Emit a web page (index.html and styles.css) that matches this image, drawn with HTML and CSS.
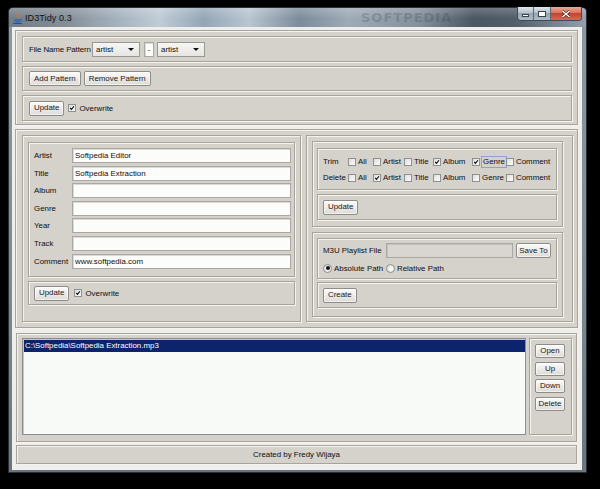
FILE: index.html
```html
<!DOCTYPE html>
<html>
<head>
<meta charset="utf-8">
<title>ID3Tidy 0.3</title>
<link rel="stylesheet" href="styles.css">
</head>
<body>
<div class="window">
  <div class="titlebar">
    <svg class="appicon" width="10" height="11" viewBox="0 0 10 11">
      <path d="M4 0.5 C2.5 2 5.5 3 4 5 M6 1.5 C5 3 7 3.5 5.8 5" stroke="#e0702a" stroke-width="1" fill="none"/>
      <path d="M1 6 H8 C8 9 6.5 10 4.5 10 C2.5 10 1 9 1 6 Z" fill="#3d6fb0"/>
      <path d="M8 6.5 C10 6.5 10 8.5 7.5 8.8" stroke="#3d6fb0" stroke-width="0.9" fill="none"/>
      <rect x="0" y="10" width="9" height="1" fill="#2c4f80"/>
    </svg>
    <span class="title">ID3Tidy 0.3</span>
    <span class="watermark">SOFTPEDIA</span>
    <div class="caption">
      <div class="cb min"><span class="g-min"></span></div>
      <div class="cb max"><span class="g-max"></span></div>
      <div class="cb close">
        <svg width="10" height="8" viewBox="0 0 10 8"><path d="M1.5 1 L8.5 7 M8.5 1 L1.5 7" stroke="#3a1a14" stroke-width="2.6"/><path d="M1.5 1 L8.5 7 M8.5 1 L1.5 7" stroke="#fff" stroke-width="1.5"/></svg>
      </div>
    </div>
  </div>

  <div class="client">
    <div class="panel top">
      <div class="sub row pattern">
        <span class="lbl">File Name Pattern</span>
        <div class="combo">artist<i class="arrow"></i></div>
        <div class="field dash">-</div>
        <div class="combo">artist<i class="arrow"></i></div>
      </div>
      <div class="sub row">
        <button class="btn">Add Pattern</button>
        <button class="btn">Remove Pattern</button>
      </div>
      <div class="sub row">
        <button class="btn">Update</button>
        <label class="chk"><i class="box on"><svg viewBox="0 0 8 8"><path d="M1.6 3.9 L3.3 5.8 L6.6 1.7" stroke="#000" stroke-width="1.4" fill="none"/></svg></i>Overwrite</label>
      </div>
    </div>

    <div class="panel middle">
      <div class="panel left">
        <div class="sub form">
          <span>Artist</span><div class="field">Softpedia Editor</div>
          <span>Title</span><div class="field">Softpedia Extraction</div>
          <span>Album</span><div class="field"></div>
          <span>Genre</span><div class="field"></div>
          <span>Year</span><div class="field"></div>
          <span>Track</span><div class="field"></div>
          <span>Comment</span><div class="field">www.softpedia.com</div>
        </div>
        <div class="sub row upd">
          <button class="btn">Update</button>
          <label class="chk"><i class="box on"><svg viewBox="0 0 8 8"><path d="M1.6 3.9 L3.3 5.8 L6.6 1.7" stroke="#000" stroke-width="1.4" fill="none"/></svg></i>Overwrite</label>
        </div>
      </div>

      <div class="panel right">
        <div class="panel group trimgroup">
          <div class="sub tgrid">
            <span>Trim</span>
            <label class="chk"><i class="box"></i>All</label>
            <label class="chk"><i class="box"></i>Artist</label>
            <label class="chk"><i class="box"></i>Title</label>
            <label class="chk"><i class="box on"><svg viewBox="0 0 8 8"><path d="M1.6 3.9 L3.3 5.8 L6.6 1.7" stroke="#000" stroke-width="1.4" fill="none"/></svg></i>Album</label>
            <label class="chk"><i class="box on"><svg viewBox="0 0 8 8"><path d="M1.6 3.9 L3.3 5.8 L6.6 1.7" stroke="#000" stroke-width="1.4" fill="none"/></svg></i><span class="focus">Genre</span></label>
            <label class="chk"><i class="box"></i>Comment</label>

            <span>Delete</span>
            <label class="chk"><i class="box"></i>All</label>
            <label class="chk"><i class="box on"><svg viewBox="0 0 8 8"><path d="M1.6 3.9 L3.3 5.8 L6.6 1.7" stroke="#000" stroke-width="1.4" fill="none"/></svg></i>Artist</label>
            <label class="chk"><i class="box"></i>Title</label>
            <label class="chk"><i class="box"></i>Album</label>
            <label class="chk"><i class="box"></i>Genre</label>
            <label class="chk"><i class="box"></i>Comment</label>
          </div>
          <div class="sub row">
            <button class="btn">Update</button>
          </div>
        </div>
        <div class="panel group m3ugroup">
          <div class="sub m3u">
            <span>M3U Playlist File</span>
            <div class="field disabled"></div>
            <button class="btn">Save To</button>
            <label class="radio"><i class="rd on"></i>Absolute Path</label>
            <label class="radio"><i class="rd"></i>Relative Path</label>
          </div>
          <div class="sub row">
            <button class="btn">Create</button>
          </div>
        </div>
      </div>
    </div>

    <div class="panel bottom">
      <div class="list">
        <div class="item sel">C:\Softpedia\Softpedia Extraction.mp3</div>
      </div>
      <div class="panel btns">
        <button class="btn">Open</button>
        <button class="btn">Up</button>
        <button class="btn">Down</button>
        <button class="btn">Delete</button>
      </div>
    </div>

    <div class="panel footer">Created by Fredy Wijaya</div>
  </div>
</div>
</body>
</html>
```

FILE: styles.css
```css
* { box-sizing: border-box; }

html, body {
  margin: 0;
  padding: 0;
}

body {
  width: 600px;
  height: 489px;
  overflow: hidden;
  background: #000;
  font-family: "Liberation Sans", Arial, sans-serif;
  font-size: 7.9px;
  color: #0e0e0e;
}

.window {
  margin: 7px 0 0 8px;
  width: 579px;
  height: 466px;
  border: 1px solid #2a3037;
  border-radius: 5px 5px 0 0;
  background: linear-gradient(180deg, #8d98a1 0%, #7e8993 60%, #6b757e 100%);
  padding: 0 4px 2px 3px;
  display: flex;
  flex-direction: column;
}

/* ---------- title bar ---------- */
.titlebar {
  height: 19px;
  margin: 0 -4px 0 -3px;
  padding: 0 4px 0 4px;
  display: flex;
  align-items: center;
  border-radius: 4px 4px 0 0;
  background:
    linear-gradient(180deg, rgba(255,255,255,0.2) 0%, rgba(255,255,255,0) 55%),
    linear-gradient(90deg, #737d86 0px, #868f98 60px, #a2b0bc 105px, #c0ccd6 150px, #94a6b6 195px,
      #b9c6d1 240px, #7c8c9a 290px, #9eabb7 340px, #83909c 410px, #4a5662 465px, #515d69 505px, #949fab 577px);
  position: relative;
}

.appicon { flex: none; margin-top: 1px; }

.title {
  margin-left: 2px;
  font-size: 9px;
  color: #111;
  letter-spacing: 0.1px;
}

.watermark {
  position: absolute;
  left: 352px;
  top: 2px;
  font-family: "DejaVu Sans", sans-serif;
  font-weight: bold;
  font-size: 13px;
  letter-spacing: 1px;
  color: rgba(40, 55, 70, 0.22);
}

.caption {
  margin-left: auto;
  align-self: flex-start;
  margin-top: -1px;
  display: flex;
  height: 14px;
  border: 1px solid #3f4953;
  border-top: none;
  border-radius: 0 0 4px 4px;
  overflow: hidden;
}

.cb {
  height: 100%;
  display: flex;
  align-items: center;
  justify-content: center;
}

.cb.min, .cb.max {
  width: 16px;
  background: linear-gradient(180deg, #dfe5eb 0%, #b4c0cb 45%, #96a5b3 50%, #aebbc7 100%);
  border-right: 1px solid #5c6772;
}
.cb.max { width: 17px; }

.cb.close {
  width: 30px;
  background: linear-gradient(180deg, #eaa997 0%, #d8735e 45%, #c3442e 50%, #d66a52 100%);
}

.g-min {
  width: 7px;
  height: 3px;
  margin-top: 3px;
  background: #fff;
  border: 1px solid #38424c;
}
.g-max {
  width: 8px;
  height: 6px;
  border: 1px solid #38424c;
  box-shadow: inset 0 0 0 1px #fff, inset 0 2px 0 1px #fff;
}

/* ---------- client area ---------- */
.client {
  height: 443px;
  background: #efeeea;
  padding: 3px 4px 0 3px;
  display: flex;
  flex-direction: column;
}

.panel, .sub {
  background: #d5d1cb;
  border: 1px solid #a7a39d;
  box-shadow: inset 1px 1px 0 #f4f3f0, 1px 1px 0 #f4f3f0;
}

/* top */
.top {
  height: 95px;
  padding: 5px 5px 3px 6px;
  display: flex;
  flex-direction: column;
  gap: 4px;
}
.top .sub { height: 26px; }
.top .sub:nth-child(2) { height: 25px; }

.row {
  display: flex;
  align-items: center;
  padding-left: 6px;
  gap: 3px;
}

.pattern { gap: 0; }
.pattern .lbl { width: 63px; white-space: nowrap; letter-spacing: -0.1px; }
.pattern .dash { margin: 0 3px 0 4px; }

.combo {
  position: relative;
  width: 48px;
  height: 15px;
  line-height: 13px;
  padding-left: 3px;
  border: 1px solid #9b9893;
  background: linear-gradient(180deg, #f6f6f5, #e6e5e2);
}
.arrow {
  position: absolute;
  right: 5px;
  top: 5px;
  width: 0;
  height: 0;
  border-left: 3px solid transparent;
  border-right: 3px solid transparent;
  border-top: 3px solid #111;
}

.field {
  height: 15px;
  line-height: 13px;
  padding-left: 2px;
  background: #fcfcfb;
  border: 1px solid #aaa8a4;
  box-shadow: inset 1px 1px 0 #dcdad6;
  white-space: nowrap;
  overflow: hidden;
}
.field.dash {
  width: 10px;
  padding: 0;
  text-align: center;
}
.field.disabled {
  background: #d9d6d1;
  box-shadow: inset 1px 1px 0 #c4c1bc;
}

.btn {
  font: inherit;
  color: #1a1614;
  height: 15px;
  padding: 0 4px;
  margin: 0;
  border: 1px solid #8e8c88;
  border-radius: 2px;
  background: linear-gradient(180deg, #fbfbfa 0%, #ecebe8 50%, #dddbd6 100%);
  box-shadow: inset 0 0 0 1px rgba(255,255,255,0.6);
  line-height: 12px;
  white-space: nowrap;
}

.chk, .radio {
  display: flex;
  align-items: center;
  white-space: nowrap;
}

.box {
  flex: none;
  width: 8px;
  height: 8px;
  margin-right: 2px;
  border: 1px solid #8f908f;
  background: linear-gradient(135deg, #dedfdd, #fbfbfb);
  display: flex;
}
.box svg { width: 6px; height: 6px; }

.top .chk, .upd .chk { margin-left: 1px; }
.top .chk .box, .upd .chk .box { margin-right: 3px; }

/* middle */
.middle {
  height: 199px;
  margin-top: 4px;
  padding: 5px 4px 5px 6px;
  display: flex;
  gap: 5px;
}

.left {
  width: 279px;
  padding: 6px 5px 0 5px;
  display: flex;
  flex-direction: column;
  gap: 4px;
}

.form {
  height: 135px;
  padding: 5px 3px 0 5px;
  display: grid;
  grid-template-columns: 38px 1fr;
  grid-auto-rows: 15px;
  row-gap: 2.6px;
  align-items: center;
}

.upd { height: 24px; padding-left: 5px; gap: 4px; }

.right {
  flex: 1;
  padding: 5px 9px 0 5px;
  display: flex;
  flex-direction: column;
  gap: 5px;
}

.trimgroup {
  height: 86px;
  padding: 6px 5px 0 4px;
  display: flex;
  flex-direction: column;
  gap: 4px;
}

.tgrid {
  height: 42px;
  padding: 6px 0 0 5px;
  display: grid;
  grid-template-columns: 25px 25px 31px 29px 39px 34px auto;
  grid-auto-rows: 13px;
  row-gap: 3px;
  align-items: center;
}

.group .row { height: 26px; padding-left: 5px; }

.focus {
  border: 1px solid #8aa2d8;
  padding: 0 1px;
  margin-left: -1px;
  line-height: 10px;
}

.m3ugroup {
  height: 85px;
  padding: 5px 5px 0 4px;
  display: flex;
  flex-direction: column;
  gap: 3px;
}

.m3u {
  height: 41px;
  padding: 4px 5px 0 5px;
  display: grid;
  grid-template-columns: 60px 127px 35px;
  grid-template-rows: 15px 12px;
  column-gap: 3px;
  row-gap: 4px;
  align-items: center;
}
.m3u .btn { height: 15px; padding: 0; }

.rd {
  flex: none;
  width: 9px;
  height: 9px;
  margin-right: 2px;
  border-radius: 50%;
  border: 1px solid #8f908f;
  background: radial-gradient(circle at 60% 60%, #fbfbfb, #d8d8d6);
  display: flex;
  align-items: center;
  justify-content: center;
}
.rd.on::after {
  content: "";
  width: 4px;
  height: 4px;
  border-radius: 50%;
  background: #111;
}

/* bottom */
.bottom {
  height: 109px;
  margin: 5px 1px 0 1px;
  padding: 4px 4px 0 5px;
  display: flex;
  gap: 3px;
}

.list {
  width: 504px;
  height: 97px;
  background: #f8faf8;
  border: 1px solid #8f8d89;
  box-shadow: inset 1px 1px 0 #c8c6c1;
  padding: 1px 0 1px 1px;
}

.item {
  height: 12px;
  line-height: 12px;
  padding-left: 1px;
}
.item.sel {
  background: #0b246b;
  color: #fff;
}

.btns {
  flex: 1;
  height: 97px;
  padding: 5px 0 0 5px;
  display: flex;
  flex-direction: column;
  gap: 3.6px;
}
.btns .btn {
  width: 30px;
  height: 14px;
  padding: 0;
}

/* footer */
.footer {
  height: 19px;
  margin: 3px 1px 0 1px;
  text-align: center;
  line-height: 17px;
}
```
